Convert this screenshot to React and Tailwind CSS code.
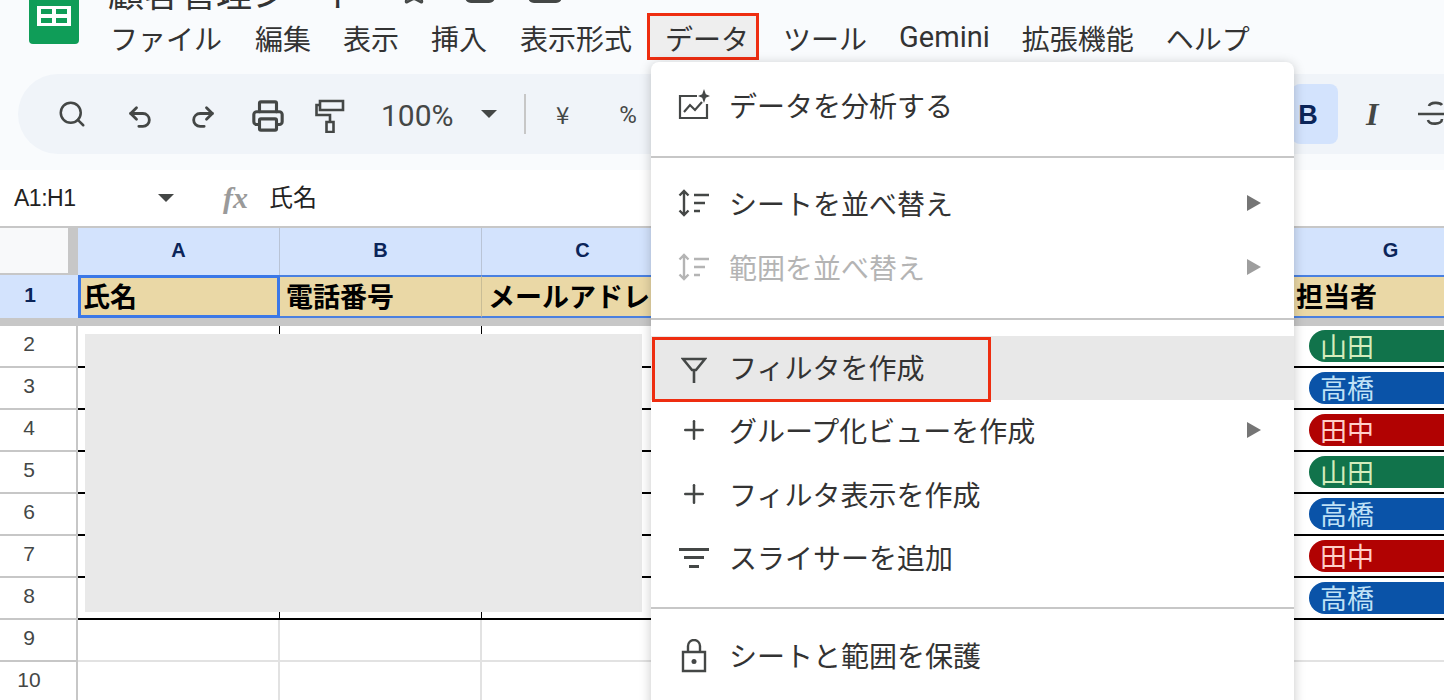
import React from "react";
import { Search, Undo2, Redo2, Printer, Plus, Star } from "lucide-react";

const jp = "font-['Noto_Sans_CJK_JP','Noto_Sans',sans-serif]";

const menus = ["ファイル", "編集", "表示", "挿入", "表示形式"];
const menusAfter = ["ツール", "Gemini", "拡張機能", "ヘルプ"];
const columns = ["A", "B", "C", "D", "E", "F", "G"];
const header = ["氏名", "電話番号", "メールアドレス", "", "", "", "担当者"];

const pills = [
  { name: "山田", cls: "bg-[#11734b] text-[#d4edbc]" },
  { name: "高橋", cls: "bg-[#0a53a8] text-[#bfe1f6]" },
  { name: "田中", cls: "bg-[#b10202] text-[#ffcfc9]" },
  { name: "山田", cls: "bg-[#11734b] text-[#d4edbc]" },
  { name: "高橋", cls: "bg-[#0a53a8] text-[#bfe1f6]" },
  { name: "田中", cls: "bg-[#b10202] text-[#ffcfc9]" },
  { name: "高橋", cls: "bg-[#0a53a8] text-[#bfe1f6]" },
];

const Caret = ({ className }) => (
  <svg width="16" height="8" viewBox="0 0 16 8" className={className}>
    <path d="M0 0h16L8 8z" fill="#444746" />
  </svg>
);

const Arrow = ({ color = "#757575" }) => (
  <svg width="14" height="16" viewBox="0 0 14 16" className="shrink-0">
    <path d="M0 0l14 8L0 16z" fill={color} />
  </svg>
);

const Logo = () => (
  <div className="w-[50px] h-[44px] bg-[#0f9d58] rounded-b-[4px] flex justify-center pt-[6px] shrink-0">
    <svg width="34" height="20" viewBox="0 0 34 20">
      <path d="M0 0h34v20H0z" fill="#fff" />
      <path d="M4 3h11v5H4zM19 3h11v5H19zM4 12h11v5H4zM19 12h11v5H19z" fill="#0f9d58" />
    </svg>
  </div>
);

const RollerIcon = () => (
  <svg width="30" height="34" viewBox="0 0 30 34" fill="none" stroke="#444746" strokeWidth="2.6">
    <path d="M5 2h23v9H5z" />
    <path d="M5 6H1.5v10H15v8" />
    <path d="M11.5 23h7v10h-7z" />
  </svg>
);

const SortIcon = ({ color }) => (
  <svg width="34" height="30" viewBox="0 0 34 30" fill="none" stroke={color} strokeWidth="2.4">
    <path d="M7 3v24M2.5 7.5L7 3l4.5 4.5M2.5 22.5L7 27l4.5-4.5" />
    <path d="M17 7h15M17 15h11M17 23h6" />
  </svg>
);

const AnalyzeIcon = () => (
  <svg width="34" height="32" viewBox="0 0 34 32" fill="none" stroke="#444746" strokeWidth="2.2">
    <path d="M20 7H3v22h27V15" />
    <path d="M7 23l6-7 5 5 7-8" />
    <path d="M27 0l1.8 5.2L33 7l-4.2 1.8L27 14l-1.8-5.2L21 7l4.2-1.8z" fill="#444746" stroke="none" />
  </svg>
);

const FunnelIcon = () => (
  <svg width="26" height="26" viewBox="0 0 26 26" fill="none" stroke="#444746" strokeWidth="2.6" className="mt-[6px]">
    <path d="M2 2h22l-9 11H11zM13 13v13" />
  </svg>
);

const SliceIcon = () => (
  <svg width="30" height="22" viewBox="0 0 30 22" fill="#444746" className="mt-[2px]">
    <path d="M0 1h30v3H0zM5 9h20v3H5zM10 18h10v3H10z" />
  </svg>
);

const LockIcon = () => (
  <svg width="26" height="34" viewBox="0 0 26 34" fill="none" stroke="#444746" strokeWidth="2.4" className="mt-[2px]">
    <path d="M2 13h22v19H2zM7 13V7a6 6 0 0 1 12 0v6" />
    <circle cx="13" cy="22.5" r="2.5" fill="#444746" stroke="none" />
  </svg>
);

const MenuItem = ({ icon, label, arrow, disabled, active, className = "h-[64px]", children }) => (
  <div className={`relative flex items-center pl-[26px] pr-[33px] ${className} ${active ? "bg-[#e8e8e8]" : ""}`}>
    <div className="w-[34px] flex justify-center shrink-0">{icon}</div>
    <span className={`ml-[18px] text-[28px] leading-none ${disabled ? "text-[#b4b4b4]" : "text-[#333333]"}`}>{label}</span>
    {arrow && <div className="ml-auto"><Arrow color={disabled ? "#9e9e9e" : "#757575"} /></div>}
    {children}
  </div>
);

const DataMenu = () => (
  <div className={`absolute left-[651px] top-[62px] w-[643px] h-[660px] bg-white rounded-[8px] shadow-[0_2px_12px_rgba(0,0,0,0.22)] pt-[11px] ${jp}`}>
    <MenuItem icon={<AnalyzeIcon />} label="データを分析する" />
    <div className="h-[2px] bg-[#c7c7c7] mt-[19px] mb-[13px]" />
    <MenuItem icon={<SortIcon color="#444746" />} label="シートを並べ替え" arrow />
    <MenuItem icon={<SortIcon color="#b4b4b4" />} label="範囲を並べ替え" arrow disabled />
    <div className="h-[2px] bg-[#c7c7c7] mt-[19px] mb-[16px]" />
    <MenuItem icon={<FunnelIcon />} label="フィルタを作成" active className="h-[64px] pb-[3px]">
      <div className="absolute left-[1px] top-[1px] w-[339px] h-[65px] border-[3px] border-[#ee2d10]" />
    </MenuItem>
    <MenuItem icon={<Plus size={30} strokeWidth={2} color="#444746" />} label="グループ化ビューを作成" arrow className="h-[63.5px] pb-[3px]" />
    <MenuItem icon={<Plus size={30} strokeWidth={2} color="#444746" />} label="フィルタ表示を作成" className="h-[63.5px] pb-[3px]" />
    <MenuItem icon={<SliceIcon />} label="スライサーを追加" className="h-[63.5px] pb-[3px]" />
    <div className="h-[2px] bg-[#c7c7c7] mt-[16px] mb-[14px]" />
    <MenuItem icon={<LockIcon />} label="シートと範囲を保護" />
  </div>
);

const ToolSlot = ({ children, className = "w-[63px]" }) => (
  <div className={`flex items-center justify-center shrink-0 ${className}`}>{children}</div>
);

const Toolbar = () => (
  <div className="ml-[18px] -mr-[60px] mt-[14px] h-[80px] rounded-[40px] bg-[#f0f4f9] flex items-center pl-[22px] pr-[52px] text-[#444746]">
    <ToolSlot><Search size={30} strokeWidth={2} /></ToolSlot>
    <ToolSlot className="w-[63px] ml-[5px] pt-[5px]"><Undo2 size={28} strokeWidth={2.4} /></ToolSlot>
    <ToolSlot className="w-[63px] pt-[5px]"><Redo2 size={28} strokeWidth={2.4} /></ToolSlot>
    <ToolSlot className="w-[63px] pl-[4px] pt-[4px]"><Printer size={34} strokeWidth={2.2} /></ToolSlot>
    <ToolSlot className="w-[63px] pl-[2px] pt-[4px]"><RollerIcon /></ToolSlot>
    <span className="ml-[21px] w-[100px] pt-[4px] text-[30px] font-['Roboto',sans-serif] leading-none">100%</span>
    <Caret />
    <div className="ml-[27px] w-[2px] h-[40px] bg-[#c7c7c7]" />
    <span className={`ml-[30px] text-[24px] leading-none ${jp}`}>¥</span>
    <span className="ml-[50px] pt-[2px] text-[24px] font-['Roboto',sans-serif] leading-none">%</span>
    <div className="ml-auto flex items-center">
      <div className="w-[46px] h-[60px] rounded-[8px] bg-[#d3e3fd] flex items-center justify-center pr-[14px] pt-[2px] text-[27px] font-bold text-[#0b2559] font-['Liberation_Sans',sans-serif]">B</div>
      <span className="ml-[28px] w-[18px] text-[32px] font-bold italic text-[#444746] font-['Liberation_Serif',serif] leading-none">I</span>
      <svg width="34" height="30" viewBox="0 0 34 30" fill="none" stroke="#444746" strokeWidth="2.6" className="ml-[34px]">
        <path d="M24 6c-2-3-12-3-13 1M0 15h34M24 20c0 6-13 6-14 1" />
      </svg>
    </div>
  </div>
);

const FormulaBar = () => (
  <div className="h-[58px] bg-white border-b-2 border-[#c7c7c7] flex items-center">
    <span className="ml-[14px] w-[144px] text-[23px] text-[#222] font-['Liberation_Sans',sans-serif] tracking-[-0.5px]">A1:H1</span>
    <Caret />
    <span className="ml-[49px] w-[46px] text-[30px] font-bold italic text-[#9a9a9a] font-['Liberation_Serif',serif] leading-none">fx</span>
    <span className={`pb-[4px] text-[24px] leading-none text-[#222] ${jp}`}>氏名</span>
  </div>
);

const HeaderRow = () => (
  <div className="flex h-[47px]">
    <div className="w-[68px] bg-[#f8f9fa] shrink-0 border-b-2 border-[#c7c7c7]" />
    <div className="w-[10px] bg-[#c7c7c7] shrink-0" />
    {columns.map((c) => (
      <div key={c} className="w-[202px] shrink-0 bg-[#d3e3fd] border-r border-[#b9c4d6] flex items-center justify-center pb-[3px] text-[20px] font-bold text-[#0b2559] font-['Liberation_Sans',sans-serif]">
        {c}
      </div>
    ))}
  </div>
);

const TitleRow = () => (
  <div className="flex h-[43px]">
    <div className="w-[78px] shrink-0 bg-[#d3e3fd] flex items-center justify-center pr-[18px] pb-[4px] text-[21px] font-bold text-[#0b2559] font-['Liberation_Sans',sans-serif]">1</div>
    {header.map((h, i) => (
      <div
        key={i}
        className={`w-[202px] shrink-0 bg-[#ead8a6] overflow-hidden whitespace-nowrap flex items-center pb-[3px] text-[27px] leading-none font-bold text-black ${jp} ${
          i === 0 ? "border-[3px] border-[#3b78e7] pl-[2px]" : "pl-[6px] border-y-2 border-[#4a80e0] border-r border-r-[#c9bd96]"
        }`}
      >
        {h}
      </div>
    ))}
  </div>
);

const DataRow = ({ n, pill }) => (
  <div className="flex h-[42px]">
    <div className="w-[78px] shrink-0 bg-white border-b-2 border-r-2 border-[#c7c7c7] flex items-center justify-center pr-[18px] pb-[4px] text-[21px] text-[#444746] font-['Liberation_Sans',sans-serif]">{n}</div>
    {columns.map((c) => (
      <div key={c} className={`w-[202px] shrink-0 bg-white flex items-start pt-[4px] ${pill ? "border-b-2 border-r border-black" : "border-b-2 border-r-2 border-[#e2e2e2]"}`}>
        {c === "G" && pill && (
          <div className={`ml-[19px] w-[180px] h-[32px] rounded-l-full flex items-center pl-[11px] pb-[1px] text-[27px] leading-none ${jp} ${pill.cls}`}>{pill.name}</div>
        )}
      </div>
    ))}
  </div>
);

export default function App() {
  return (
    <div className={`relative w-[1444px] h-[700px] overflow-hidden bg-white ${jp}`}>
      <div className="h-[170px] bg-[#f9fbfd]">
        <div className="flex pl-[29px] h-[60px]">
          <Logo />
          <div className="ml-[15px] flex flex-col">
            <div className="-mt-[27px] h-[40px] flex items-center pl-[14px] pb-[4px] text-[36px] leading-none text-[#333333] whitespace-nowrap">
              <span>顧客管理シート</span>
              <Star size={30} className="ml-[39px] text-[#444746]" />
              <div className="self-end mb-[6px] ml-[36px] w-[30px] h-[30px] rounded-[6px] bg-[#444746]" />
              <div className="self-end mb-[6px] ml-[33px] w-[34px] h-[30px] rounded-[6px] bg-[#444746]" />
            </div>
            <div className="flex items-center h-[47px] text-[28px] text-[#333333] whitespace-nowrap">
              {menus.map((m, i) => (
                <div key={m} className={`pt-[2px] leading-none ${i === 0 ? "pl-[16px] pr-[17px]" : i === 4 ? "pl-[17px] pr-[15px]" : "px-[16px]"}`}>{m}</div>
              ))}
              <div className="h-[47px] flex items-center bg-[#eeeeee] border-[3px] border-[#ee2d10] pl-[15px] pr-[7px] pt-[2px] leading-none">データ</div>
              <div className="w-[6px]" />
              {menusAfter.map((m) => (
                <div key={m} className={`pt-[2px] leading-none ${m === "ツール" ? "pl-[18px] pr-[16px]" : "px-[16px]"} ${m === "Gemini" ? "font-['Roboto',sans-serif] text-[29px]" : ""}`}>{m}</div>
              ))}
            </div>
          </div>
        </div>
        <Toolbar />
      </div>
      <FormulaBar />
      <HeaderRow />
      <TitleRow />
      <div className="h-[8px] bg-[#c7c7c7]" />
      {pills.map((p, i) => (
        <DataRow key={i} n={i + 2} pill={p} />
      ))}
      <DataRow n={9} />
      <DataRow n={10} />
      {/* masked data area */}
      <div className="absolute left-[85px] top-[334px] w-[557px] h-[278px] bg-[#e9e9e9]" />
      <DataMenu />
    </div>
  );
}
